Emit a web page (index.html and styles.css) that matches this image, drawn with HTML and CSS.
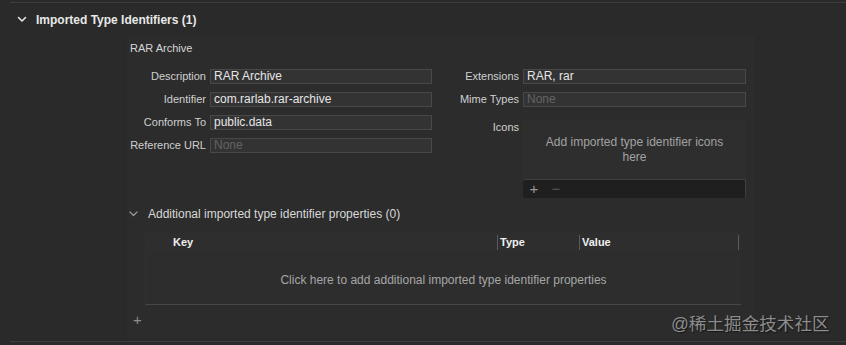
FILE: index.html
```html
<!DOCTYPE html>
<html lang="en">
<head>
  <meta charset="UTF-8">
  <title>Imported Type Identifiers</title>
  <link rel="stylesheet" href="styles.css">
</head>
<body>

  <div class="rule rule-top"></div>

  <div class="section-head">
    <svg class="chevron" width="10" height="7" viewBox="0 0 10 7"><path d="M1.5 1.5 L5 5 L8.5 1.5" fill="none" stroke="#e6e6e6" stroke-width="1.6" stroke-linecap="round" stroke-linejoin="round"/></svg>
    <span>Imported Type Identifiers (1)</span>
  </div>

  <div class="panel">
    <div class="item-title">RAR Archive</div>

    <div class="form">
      <div class="form-col left">
        <label>Description</label>
        <div class="field">RAR Archive</div>
        <label>Identifier</label>
        <div class="field">com.rarlab.rar-archive</div>
        <label>Conforms To</label>
        <div class="field">public.data</div>
        <label>Reference URL</label>
        <div class="field empty">None</div>
      </div>

      <div class="form-col right">
        <label>Extensions</label>
        <div class="field">RAR, rar</div>
        <label>Mime Types</label>
        <div class="field empty">None</div>
        <label class="icons-label">Icons</label>
        <div class="icons">
          <div class="icons-drop">Add imported type identifier icons<br>here</div>
          <div class="icons-bar">
            <span class="bar-btn">+</span>
            <span class="bar-btn dim">&minus;</span>
          </div>
        </div>
      </div>
    </div>

    <div class="sub-head">
      <svg class="chevron" width="9" height="6" viewBox="0 0 9 6"><path d="M1 1 L4.5 4.5 L8 1" fill="none" stroke="#9a9a9a" stroke-width="1.2" stroke-linecap="round" stroke-linejoin="round"/></svg>
      <span>Additional imported type identifier properties (0)</span>
    </div>

    <div class="table">
      <div class="table-head">
        <div class="col key">Key</div>
        <div class="col type">Type</div>
        <div class="col value">Value</div>
        <div class="col end"></div>
      </div>
      <div class="table-body">Click here to add additional imported type identifier properties</div>
    </div>

    <div class="add-row">+</div>
  </div>

  <div class="rule rule-bottom"></div>

  <div class="watermark">@稀土掘金技术社区</div>

</body>
</html>
```

FILE: styles.css
```css
body {
  margin: 0;
  padding: 0;
  background-color: #2a2a2a;
  font-family: "Liberation Sans", Arial, sans-serif;
  font-size: 11px;
  color: #dcdcdc;
  width: 846px;
  height: 345px;
  overflow: hidden;
  position: relative;
}

.rule {
  height: 1px;
  background-color: #3d3d3d;
  margin-left: 10px;
}

.rule-top {
  margin-top: 2px;
}

.section-head {
  display: flex;
  align-items: center;
  height: 33px;
  padding-left: 17px;
  font-size: 12px;
  font-weight: bold;
  color: #e8e8e8;
}

.section-head .chevron {
  margin-right: 9px;
}

.panel {
  margin-left: 127px;
  width: 628px;
  height: 302px;
  background-color: #2c2c2c;
}

.item-title {
  padding: 6px 0 0 3px;
  height: 13px;
  line-height: 13px;
  color: #d6d6d6;
}

.form {
  display: flex;
  margin-top: 14px;
}

.form-col {
  display: grid;
  row-gap: 8px;
  column-gap: 4px;
  align-content: start;
}

.form-col.left {
  grid-template-columns: 79px 222px;
}

.form-col.right {
  grid-template-columns: 83px 223px;
  margin-left: 4px;
}

.form-col label {
  text-align: right;
  line-height: 15px;
  color: #d0d0d0;
  white-space: nowrap;
}

.field {
  height: 13px;
  line-height: 13px;
  padding-left: 3px;
  font-size: 12px;
  background-color: #333333;
  border: 1px solid #484848;
  color: #e6e6e6;
  white-space: nowrap;
  overflow: hidden;
}

.field.empty {
  color: #636363;
}

.form-col .icons-label {
  align-self: start;
  padding-top: 5px;
}

.icons {
  margin-top: 5px;
  display: flex;
  flex-direction: column;
}

.icons-drop {
  height: 59px;
  display: flex;
  align-items: center;
  justify-content: center;
  text-align: center;
  font-size: 12px;
  line-height: 15px;
  color: #a2a2a2;
  background-color: #2e2e2e;
}

.icons-bar {
  height: 18px;
  display: flex;
  align-items: center;
  gap: 10px;
  padding-left: 5px;
  background-color: #1f1f1f;
  border-top: 1px solid #3e3e3e;
  border-right: 1px solid #3e3e3e;
  border-radius: 2px;
}

.bar-btn {
  width: 12px;
  text-align: center;
  font-size: 15px;
  line-height: 14px;
  color: #9a9a9a;
}

.bar-btn.dim {
  color: #555555;
}

.sub-head {
  display: flex;
  align-items: center;
  margin-top: 9px;
  height: 14px;
  padding-left: 2px;
  font-size: 12px;
  color: #d8d8d8;
}

.sub-head .chevron {
  margin-right: 10px;
}

.table {
  margin: 12px 0 0 14px;
  width: 604px;
}

.table-head {
  display: flex;
  height: 18px;
  margin-left: 4px;
  margin-right: 4px;
  background-color: #2e2e2e;
  align-items: center;
  font-weight: bold;
  color: #f0f0f0;
}

.col {
  height: 15px;
  line-height: 15px;
  padding-left: 2px;
}

.col.key {
  width: 324px;
  padding-left: 28px;
}

.col.type,
.col.value,
.col.end {
  border-left: 1px solid #5a5a5a;
}

.col.type {
  width: 79px;
}

.col.value {
  width: 156px;
}

.table-body {
  height: 48px;
  padding-top: 5px;
  margin-left: 4px;
  margin-right: 4px;
  display: flex;
  align-items: center;
  justify-content: center;
  font-size: 12px;
  color: #a6a6a6;
  background-color: #2d2d2d;
  border-bottom: 1px solid #474747;
  border-left: 1px solid #313131;
}

.add-row {
  margin: 7px 0 0 6px;
  width: 12px;
  font-size: 15px;
  line-height: 15px;
  color: #8e8e8e;
}

.rule-bottom {
  margin-top: 3px;
}

.watermark {
  position: absolute;
  left: 671px;
  top: 310px;
  font-family: "Liberation Sans", "Noto Sans CJK SC", sans-serif;
  font-size: 17.6px;
  color: #8c8c8c;
  text-shadow: 1px 1px 1px #151515;
}
```
